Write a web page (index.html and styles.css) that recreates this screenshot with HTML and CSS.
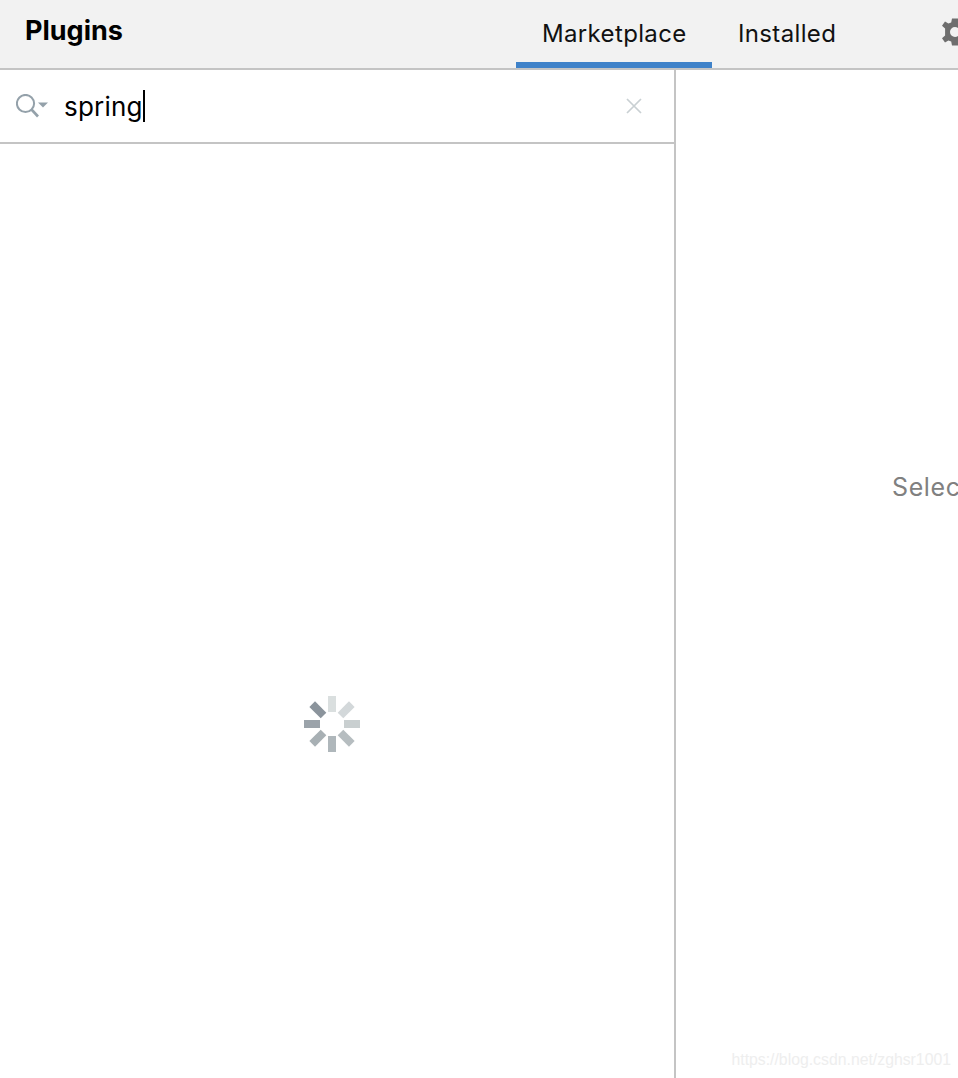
FILE: index.html
```html
<!DOCTYPE html>
<html lang="en">
<head>
<meta charset="utf-8">
<title>Plugins</title>
<link rel="stylesheet" href="styles.css">
</head>
<body>
<div class="app">
  <header class="topbar">
    <h1 class="title">Plugins</h1>
    <nav class="tabs">
      <div class="tab tab-active">Marketplace</div>
      <div class="tab">Installed</div>
    </nav>
    <svg class="gear" width="28" height="28" viewBox="-14 -14 28 28">
      <path fill-rule="evenodd" fill="#6e6e6e" d="M-3 -13.5H3L3.8 -9.6L6.6 -8.4L10 -10.6L13 -6.2L9.9 -3.6V3.6L13 6.2L10 10.6L6.6 8.4L3.8 9.6L3 13.5H-3L-3.8 9.6L-6.6 8.4L-10 10.6L-13 6.2L-9.9 3.6V-3.6L-13 -6.2L-10 -10.6L-6.6 -8.4L-3.8 -9.6ZM0 -5A5 5 0 1 0 0 5A5 5 0 1 0 0 -5Z"/>
    </svg>
  </header>
  <main class="content">
    <section class="left">
      <div class="search">
        <svg class="search-icon" width="34" height="26" viewBox="0 0 34 26">
          <circle cx="9.500" cy="9.500" r="8.600" fill="none" stroke="#94a1aa" stroke-width="2"/>
          <path d="M15.500 15.500L22 22.500" fill="none" stroke="#94a1aa" stroke-width="2.600"/>
          <path d="M22 8.500H32L27 13.500Z" fill="#94a1aa"/>
        </svg>
        <div class="query">spring<span class="caret"></span></div>
        <svg class="clear" width="16" height="16" viewBox="0 0 16 16">
          <path d="M1 1L15 15M15 1L1 15" fill="none" stroke="#c9d0d3" stroke-width="1.700"/>
        </svg>
      </div>
      <div class="results">
        <svg class="spinner" width="56" height="56" viewBox="0 0 56 56">
          <rect x="24" y="0" width="8" height="16" fill="#dadfdf"/>
          <rect x="24" y="0" width="8" height="16" fill="#d3d8da" transform="rotate(45 28 28)"/>
          <rect x="24" y="0" width="8" height="16" fill="#c9cfd0" transform="rotate(90 28 28)"/>
          <rect x="24" y="0" width="8" height="16" fill="#b6bdc0" transform="rotate(135 28 28)"/>
          <rect x="24" y="0" width="8" height="16" fill="#afb7bb" transform="rotate(180 28 28)"/>
          <rect x="24" y="0" width="8" height="16" fill="#a8b0b4" transform="rotate(225 28 28)"/>
          <rect x="24" y="0" width="8" height="16" fill="#9ba3aa" transform="rotate(270 28 28)"/>
          <rect x="24" y="0" width="8" height="16" fill="#8b949c" transform="rotate(315 28 28)"/>
        </svg>
      </div>
    </section>
    <section class="right">
      <div class="placeholder">Selec</div>
    </section>
  </main>
  <div class="watermark">https://blog.csdn.net/zghsr1001</div>
</div>
</body>
</html>
```
FILE: styles.css
```css
html, body {
  margin: 0;
  padding: 0;
  background: #fff;
}
.app {
  position: relative;
  width: 958px;
  height: 1078px;
  overflow: hidden;
  display: flex;
  flex-direction: column;
  font-family: Inter, "Liberation Sans", sans-serif;
}
.topbar {
  flex: none;
  height: 68px;
  display: flex;
  background: #f2f2f2;
  border-bottom: 2px solid #c4c4c4;
}
.title {
  flex: none;
  margin: 0;
  padding: 14px 0 0 25px;
  width: 516px;
  box-sizing: border-box;
  font-size: 27px;
  line-height: 34px;
  font-weight: 700;
  color: #000;
}
.tabs {
  flex: none;
  display: flex;
}
.tab {
  flex: none;
  box-sizing: border-box;
  height: 68px;
  padding: 16px 26px 0;
  font-size: 24px;
  line-height: 36px;
  letter-spacing: 0.35px;
  color: #111;
}
.tab-active {
  width: 196px;
  border-bottom: 6px solid #3f82c9;
}
.gear {
  flex: none;
  margin: 18px 0 0 79px;
}
.content {
  flex: 1;
  display: flex;
  min-height: 0;
}
.left {
  flex: none;
  width: 674px;
  display: flex;
  flex-direction: column;
  border-right: 2px solid #c4c4c4;
}
.search {
  flex: none;
  height: 72px;
  display: flex;
  align-items: center;
  border-bottom: 2px solid #c4c4c4;
  padding-left: 16px;
}
.search-icon {
  flex: none;
  margin-top: 1px;
}
.query {
  display: flex;
  align-items: center;
  margin: 2px 0 0 14px;
  font-size: 26px;
  line-height: 32px;
  letter-spacing: 0.2px;
  color: #000;
}
.caret {
  width: 2px;
  height: 32px;
  margin-top: -2px;
  background: #000;
}
.clear {
  flex: none;
  margin-left: auto;
  margin-right: 32px;
}
.results {
  flex: 1;
  padding: 552px 0 0 304px;
}
.spinner {
  display: block;
}
.right {
  flex: 1;
  min-width: 0;
  padding: 400px 0 0 216px;
}
.placeholder {
  font-size: 25px;
  line-height: 34px;
  letter-spacing: 0.6px;
  color: #808080;
  white-space: nowrap;
}
.watermark {
  position: absolute;
  right: 7px;
  bottom: 8px;
  font-family: "Liberation Sans", sans-serif;
  font-size: 15.800px;
  line-height: 20px;
  color: #eeeeee;
}
```
